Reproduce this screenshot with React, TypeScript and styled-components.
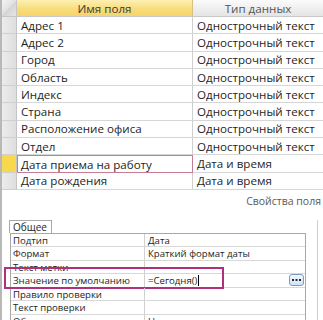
import styled, { createGlobalStyle } from "styled-components";

const GlobalStyle = createGlobalStyle`
  html, body {
    margin: 0;
    padding: 0;
    background: #ffffff;
  }
  * {
    box-sizing: border-box;
  }
`;

const fields = [
  { name: "Адрес 1", type: "Однострочный текст" },
  { name: "Адрес 2", type: "Однострочный текст" },
  { name: "Город", type: "Однострочный текст" },
  { name: "Область", type: "Однострочный текст" },
  { name: "Индекс", type: "Однострочный текст" },
  { name: "Страна", type: "Однострочный текст" },
  { name: "Расположение офиса", type: "Однострочный текст" },
  { name: "Отдел", type: "Однострочный текст" },
  { name: "Дата приема на работу", type: "Дата и время", selected: true },
  { name: "Дата рождения", type: "Дата и время" },
];

const props = [
  { label: "Подтип", value: "Дата" },
  { label: "Формат", value: "Краткий формат даты" },
  { label: "Текст метки", value: "" },
  { label: "Значение по умолчанию", value: "=Сегодня()", active: true },
  { label: "Правило проверки", value: "" },
  { label: "Текст проверки", value: "" },
  { label: "Обязательное поле", value: "Нет" },
];

function App() {
  return (
    <>
      <GlobalStyle />
      <Screen>
        <FieldGrid>
          <Corner />
          <NameHeader>Имя поля</NameHeader>
          <TypeHeader>Тип данных</TypeHeader>
          {fields.map((f) => (
            <Row key={f.name}>
              <Selector $selected={!!f.selected} />
              <NameCell $selected={!!f.selected}>{f.name}</NameCell>
              <TypeCell>{f.type}</TypeCell>
            </Row>
          ))}
        </FieldGrid>

        <Caption>Свойства поля</Caption>

        <Panel>
          <Tab>Общее</Tab>
          <PropGrid>
            {props.map((p) => (
              <PropRow key={p.label}>
                <PropLabel>{p.label}</PropLabel>
                <PropValue>
                  {p.value}
                  {p.active && <Caret />}
                  {p.active && (
                    <DotsButton>
                      <svg width="9" height="3" viewBox="0 0 9 3">
                        <rect x="0" y="0" width="2" height="2" fill="#1a2a44" />
                        <rect x="3.5" y="0" width="2" height="2" fill="#1a2a44" />
                        <rect x="7" y="0" width="2" height="2" fill="#1a2a44" />
                      </svg>
                    </DotsButton>
                  )}
                </PropValue>
                {p.active && <Highlight />}
              </PropRow>
            ))}
          </PropGrid>
        </Panel>
      </Screen>
    </>
  );
}

export default App;

const Screen = styled.div`
  position: relative;
  width: 323px;
  height: 320px;
  overflow: hidden;
  background: #ffffff;
  border-left: 2px solid #b8b8b8;
  font-family: "Open Sans", "Noto Sans", sans-serif;
  color: #1e1e1e;
`;

const FieldGrid = styled.div`
  display: grid;
  grid-template-columns: 15px 176px 1fr;
  grid-template-rows: 17px repeat(10, 17.3px);
`;

const Corner = styled.div`
  background: linear-gradient(135deg, #f4f4f4 0%, #e2e2e2 48%, #d4d4d4 52%, #e6e6e6 100%);
  border-right: 1px solid #c6c6c6;
  border-bottom: 1px solid #c6c6c6;
`;

const HeaderCell = styled.div`
  display: flex;
  align-items: center;
  justify-content: center;
  font-size: 11.6px;
  border-bottom: 1px solid #c8c8c8;
`;

const NameHeader = styled(HeaderCell)`
  background: linear-gradient(#fdf0b4, #f8dd7c 55%, #f6d468);
  border-right: 1px solid #d8c080;
  color: #3a3a3a;
`;

const TypeHeader = styled(HeaderCell)`
  background: linear-gradient(#fbfbfb, #eeeeee 55%, #e4e4e4);
  color: #555555;
`;

const Row = styled.div`
  display: contents;
`;

const Selector = styled.div<{ $selected: boolean }>`
  background: ${(p) => (p.$selected ? "#f8d84c" : "linear-gradient(90deg, #ececec, #dedede)")};
  border-right: 1px solid #c4c4c4;
  border-bottom: 1px solid #cfcfcf;
`;

const Cell = styled.div`
  display: flex;
  align-items: center;
  padding-left: 4px;
  font-size: 11.6px;
  white-space: nowrap;
  overflow: hidden;
  border-bottom: 1px solid #d6d6d6;
`;

const NameCell = styled(Cell)<{ $selected: boolean }>`
  border-right: 1px solid #cfcfcf;
  ${(p) =>
    p.$selected &&
    `
    border: 1px solid #c77b94;
    padding-left: 3px;
  `}
`;

const TypeCell = styled(Cell)``;

const Caption = styled.div`
  height: 22px;
  padding-right: 2px;
  display: flex;
  align-items: center;
  justify-content: flex-end;
  font-size: 10.5px;
  color: #5a5a5a;
`;

const Panel = styled.div`
  margin-top: 8px;
  padding-left: 8px;
  padding-right: 11px;
  border-right: 1px solid #cfcfcf;
  width: 316px;
  height: 110px;
`;

const Tab = styled.div`
  display: flex;
  align-items: center;
  width: fit-content;
  height: 13px;
  padding: 0 4px 0 3px;
  margin-left: -1px;
  font-size: 10px;
  border: 1px solid #a8a8a8;
  border-bottom: none;
  background: #ffffff;
`;

const PropGrid = styled.div`
  border: 1px solid #a8a8a8;
  border-bottom: none;
`;

const PropRow = styled.div`
  position: relative;
  display: grid;
  grid-template-columns: 134px 1fr;
  height: 13.5px;
  border-bottom: 1px solid #d8d8d8;
`;

const PropLabel = styled.div`
  padding-left: 2px;
  font-size: 9.6px;
  line-height: 13px;
  white-space: nowrap;
  overflow: hidden;
  border-right: 1px solid #d0d0d0;
`;

const PropValue = styled.div`
  position: relative;
  display: flex;
  align-items: center;
  padding-left: 3px;
  font-size: 9.6px;
  line-height: 13px;
  white-space: nowrap;
`;

const Caret = styled.span`
  display: inline-block;
  width: 1px;
  height: 11px;
  margin-left: 1px;
  background: #000000;
`;

const DotsButton = styled.span`
  position: absolute;
  right: 1px;
  top: 0px;
  width: 15px;
  height: 12px;
  display: flex;
  align-items: center;
  justify-content: center;
  border: 1px solid #7f9db9;
  border-radius: 3px;
  background: linear-gradient(#f2f8fd, #cfe3f4);
`;

const Highlight = styled.div`
  position: absolute;
  left: -7px;
  top: -7px;
  width: 220px;
  height: 22px;
  border: 2px solid #b1307e;
  pointer-events: none;
`;
